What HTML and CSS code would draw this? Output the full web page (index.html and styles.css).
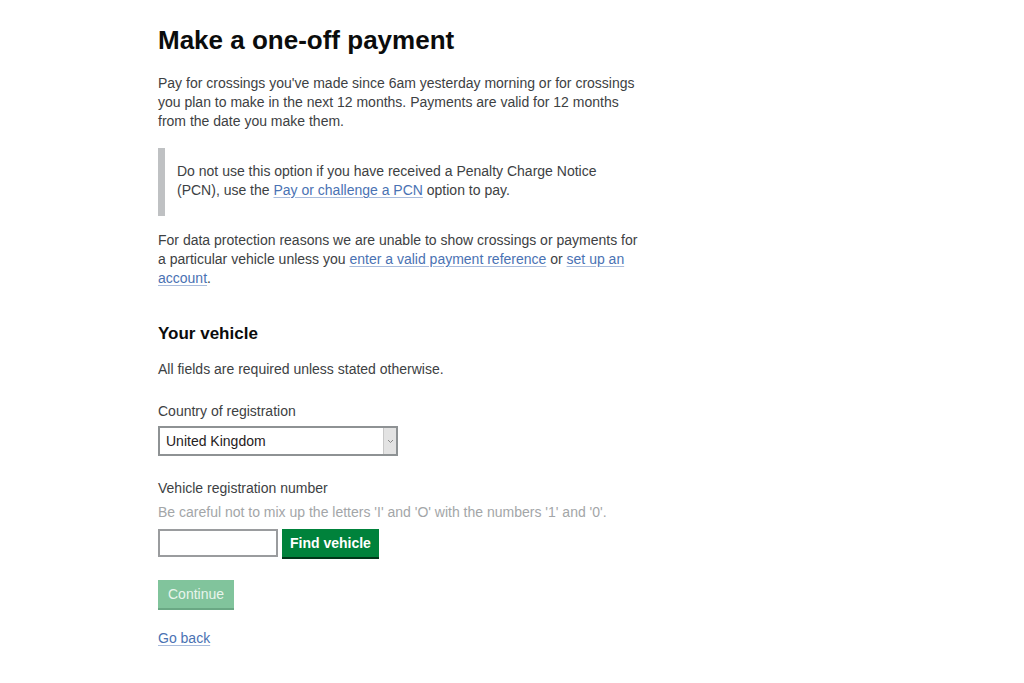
FILE: index.html
```html
<!DOCTYPE html>
<html lang="en">
<head>
  <meta charset="UTF-8" />
  <title>Make a one-off payment</title>
  <link rel="stylesheet" href="styles.css">
</head>
<body>

<main class="content">
  <h1>Make a one-off payment</h1>

  <p>
    Pay for crossings you've made since 6am yesterday morning or for crossings
    you plan to make in the next 12 months. Payments are valid for 12 months
    from the date you make them.
  </p>

  <div class="inset">
    <p>
      Do not use this option if you have received a Penalty Charge Notice
      (PCN), use the <a href="#">Pay or challenge a PCN</a> option to pay.
    </p>
  </div>

  <p>
    For data protection reasons we are unable to show crossings or payments for
    a particular vehicle unless you <a href="#">enter a valid payment reference</a> or <a href="#">set up an
    account</a>.
  </p>

  <h2>Your vehicle</h2>
  <p class="intro">All fields are required unless stated otherwise.</p>

  <form>
    <div class="field">
      <label>Country of registration</label>
      <div class="select">
        <span class="select-value">United Kingdom</span>
        <span class="select-arrow">
          <svg width="7" height="5" viewBox="0 0 7 5"><path d="M1 1 L3.5 3.5 L6 1" fill="none" stroke="#8a8a8a" stroke-width="1"/></svg>
        </span>
      </div>
    </div>

    <div class="field">
      <label>Vehicle registration number</label>
      <span class="hint">Be careful not to mix up the letters 'I' and 'O' with the numbers '1' and '0'.</span>
      <div class="find-row">
        <input type="text" class="vrn" />
        <button type="button" class="button">Find vehicle</button>
      </div>
    </div>

    <button type="button" class="button disabled">Continue</button>
  </form>

  <a href="#" class="back">Go back</a>
</main>

</body>
</html>
```

FILE: styles.css
```css
body {
  margin: 0;
  background-color: #fff;
  color: #3d4143;
  font-family: 'Liberation Sans', Arial, sans-serif;
  font-size: 14px;
  line-height: 19px;
}
.content {
  padding: 24px 0 40px 158px;
  width: 490px;
}
h1 {
  margin: 0 0 18px;
  font-size: 26px;
  line-height: 32px;
  font-weight: bold;
  color: #0b0c0c;
}
h2 {
  margin: 34px 0 14px;
  font-size: 17px;
  line-height: 24px;
  font-weight: bold;
  color: #0b0c0c;
}
p {
  margin: 0;
}
a {
  color: #4a72b3;
  text-decoration: underline;
  text-decoration-color: #a9bcdc;
  text-underline-offset: 2px;
}
.inset {
  margin: 17px 0 15px;
  padding: 14px 0 16px 12px;
  border-left: 7px solid #bfc1c3;
}
.inset p {
  max-width: 425px;
}
.intro {
  margin-bottom: 23px;
}
.field {
  margin-bottom: 23px;
}
label {
  display: block;
  margin-bottom: 5px;
}
.select {
  display: flex;
  width: 236px;
  height: 26px;
  border: 2px solid #8e9294;
  background-color: #fff;
}
.select-value {
  flex-grow: 1;
  padding: 0 6px;
  line-height: 26px;
  color: #1f2122;
}
.select-arrow {
  display: flex;
  align-items: center;
  justify-content: center;
  width: 12px;
  background-color: #e3e3e3;
  border-left: 1px solid #c8c8c8;
}
.hint {
  display: block;
  color: #a3a6a8;
  margin-bottom: 7px;
}
.find-row {
  display: flex;
  gap: 4px;
}
.vrn {
  box-sizing: border-box;
  width: 120px;
  height: 28px;
  margin: 0;
  border: 2px solid #9a9c9e;
  padding: 0 6px;
  font-family: inherit;
  font-size: 14px;
}
.button {
  box-sizing: border-box;
  height: 28px;
  margin: 0;
  padding: 0 8px;
  border: none;
  background-color: #00823b;
  box-shadow: 0 2px 0 #003618;
  color: #fff;
  font-family: inherit;
  font-size: 14px;
  font-weight: bold;
}
.button.disabled {
  display: block;
  padding: 0 10px;
  background-color: #81c49c;
  box-shadow: 0 2px 0 #6aa884;
  color: #e8f5ec;
  font-weight: normal;
}
.back {
  display: inline-block;
  margin-top: 21px;
}
```
